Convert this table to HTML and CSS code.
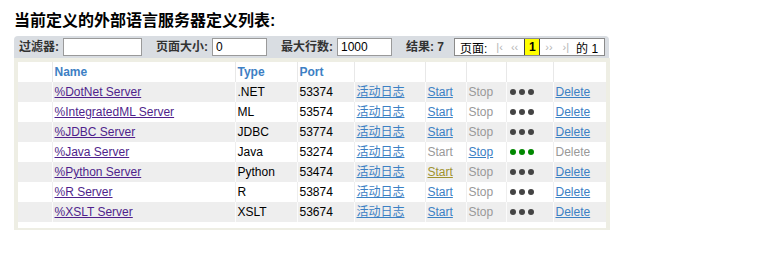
FILE: index.html
```html
<!DOCTYPE html>
<html>
<head>
<meta charset="utf-8">
<link rel="stylesheet" href="styles.css">
</head>
<body>
<div class="page">
  <h1 class="title">当前定义的外部语言服务器定义列表:</h1>
  <div class="toolbar">
    <label class="tl">过滤器:</label><input class="inp w-filter" type="text" value="">
    <label class="tl gap">页面大小:</label><input class="inp w-small" type="text" value="0">
    <label class="tl gap">最大行数:</label><input class="inp w-small" type="text" value="1000">
    <span class="tl gap">结果: 7</span>
    <div class="pager">
      <span class="pg-label">页面:</span>
      <span class="pg-nav first">|‹</span>
      <span class="pg-nav prev">‹‹</span>
      <span class="pg-cur">1</span>
      <span class="pg-nav next">››</span>
      <span class="pg-nav last">›|</span>
      <span class="pg-of">的 1</span>
    </div>
  </div>
  <div class="frame">
    <table class="grid">
      <colgroup>
        <col style="width:34px"><col style="width:183px"><col style="width:62px"><col style="width:57px"><col style="width:71px"><col style="width:41px"><col style="width:40px"><col style="width:47px"><col style="width:53px">
      </colgroup>
      <thead>
        <tr><th></th><th>Name</th><th>Type</th><th>Port</th><th></th><th></th><th></th><th></th><th></th></tr>
      </thead>
      <tbody>
        <tr><td></td><td><a class="name">%DotNet Server</a></td><td>.NET</td><td>53374</td><td><a class="lnk">活动日志</a></td><td><a class="lnk">Start</a></td><td class="dis">Stop</td><td><span class="dots"><i></i><i></i><i></i></span></td><td><a class="lnk">Delete</a></td></tr>
        <tr><td></td><td><a class="name">%IntegratedML Server</a></td><td>ML</td><td>53574</td><td><a class="lnk">活动日志</a></td><td><a class="lnk">Start</a></td><td class="dis">Stop</td><td><span class="dots"><i></i><i></i><i></i></span></td><td><a class="lnk">Delete</a></td></tr>
        <tr><td></td><td><a class="name">%JDBC Server</a></td><td>JDBC</td><td>53774</td><td><a class="lnk">活动日志</a></td><td><a class="lnk">Start</a></td><td class="dis">Stop</td><td><span class="dots"><i></i><i></i><i></i></span></td><td><a class="lnk">Delete</a></td></tr>
        <tr><td></td><td><a class="name">%Java Server</a></td><td>Java</td><td>53274</td><td><a class="lnk">活动日志</a></td><td class="dis">Start</td><td><a class="lnk">Stop</a></td><td><span class="dots on"><i></i><i></i><i></i></span></td><td class="dis">Delete</td></tr>
        <tr><td></td><td><a class="name">%Python Server</a></td><td>Python</td><td>53474</td><td><a class="lnk">活动日志</a></td><td><a class="lnk hover">Start</a></td><td class="dis">Stop</td><td><span class="dots"><i></i><i></i><i></i></span></td><td><a class="lnk">Delete</a></td></tr>
        <tr><td></td><td><a class="name">%R Server</a></td><td>R</td><td>53874</td><td><a class="lnk">活动日志</a></td><td><a class="lnk">Start</a></td><td class="dis">Stop</td><td><span class="dots"><i></i><i></i><i></i></span></td><td><a class="lnk">Delete</a></td></tr>
        <tr><td></td><td><a class="name">%XSLT Server</a></td><td>XSLT</td><td>53674</td><td><a class="lnk">活动日志</a></td><td><a class="lnk">Start</a></td><td class="dis">Stop</td><td><span class="dots"><i></i><i></i><i></i></span></td><td><a class="lnk">Delete</a></td></tr>
      </tbody>
    </table>
  </div>
</div>
</body>
</html>
```

FILE: styles.css
```css
html, body {
  margin: 0;
  padding: 0;
  background: #ffffff;
}
body {
  font-family: "Liberation Sans", Arial, "Noto Sans CJK SC", sans-serif;
  font-size: 12px;
  color: #000;
}
.page {
  padding: 11px 0 0 14px;
  width: 596px;
}
.title {
  margin: 0 0 5px 0;
  font-size: 16px;
  line-height: 20px;
  font-weight: bold;
  color: #000;
}
.toolbar {
  display: flex;
  align-items: center;
  height: 22px;
  box-sizing: border-box;
  padding: 0 0 0 5px;
  background: #d9dde2;
  border-radius: 4px 4px 0 0;
  width: 595px;
}
.tl {
  font-weight: bold;
  color: #333;
  font-size: 12px;
  line-height: 14px;
  white-space: nowrap;
}
.gap {
  margin-left: 14px;
}
.inp {
  margin: 0 0 0 4px;
  height: 18px;
  box-sizing: border-box;
  border: 1px solid #9a9a9a;
  background: #fff;
  padding: 0 3px;
  font-family: "Liberation Sans", Arial, sans-serif;
  font-size: 12px;
  color: #000;
  outline: none;
}
.w-filter { width: 79px; }
.w-small { width: 55px; }
.pager {
  margin-left: 10px;
  display: flex;
  align-items: center;
  height: 18px;
  box-sizing: border-box;
  border: 1px solid #8a8a8a;
  background: #fff;
  width: 151px;
  padding-left: 5px;
  font-size: 12px;
  color: #000;
  white-space: nowrap;
}
.pg-label { flex: none; }
.pg-nav {
  flex: none;
  color: #b4b4b4;
  font-size: 11px;
  line-height: 12px;
}
.pg-nav.first { margin-left: 9px; }
.pg-nav.prev { margin-left: 8px; }
.pg-nav.next { margin-left: 5px; }
.pg-nav.last { margin-left: 10px; }
.pg-cur {
  flex: none;
  background: #ffff00;
  border-left: 1px solid #444;
  border-right: 1px solid #444;
  font-weight: bold;
  width: 14px;
  height: 16px;
  line-height: 16px;
  text-align: center;
  margin-left: 6px;
}
.pg-of { flex: none; margin-left: 7px; }
.frame {
  width: 596px;
  box-sizing: border-box;
  background: #ffffff;
  border: 4px solid #eeeee4;
  border-bottom-width: 2px;
  padding-bottom: 6px;
}
.grid {
  border-collapse: collapse;
  table-layout: fixed;
  width: 588px;
}
.grid th, .grid td {
  height: 20px;
  padding: 0 0 0 2px;
  text-align: left;
  white-space: nowrap;
  overflow: hidden;
  border-left: 1px solid #eeeeee;
  font-size: 12px;
  line-height: 14px;
}
.grid th:first-child, .grid td:first-child { border-left: 0; }
.grid thead th {
  height: 20px;
  font-weight: bold;
  color: #3d80c4;
  background: #fff;
  border-left-color: #e8e8e8;
}
.grid tbody tr:nth-child(odd) td {
  background: #eeeeee;
  border-left-color: #fbfbfb;
}
.name {
  color: #4f1f8c;
  text-decoration: underline;
}
.lnk {
  color: #3b80c4;
  text-decoration: underline;
}
.lnk.hover { color: #a0922e; }
.dis { color: #999999; }
.dots {
  display: inline-flex;
  gap: 3px;
  margin-left: 1px;
  vertical-align: middle;
  position: relative;
  top: -1px;
}
.dots i {
  display: block;
  width: 6px;
  height: 6px;
  border-radius: 50%;
  background: #444444;
}
.dots.on i { background: #008800; }
```
